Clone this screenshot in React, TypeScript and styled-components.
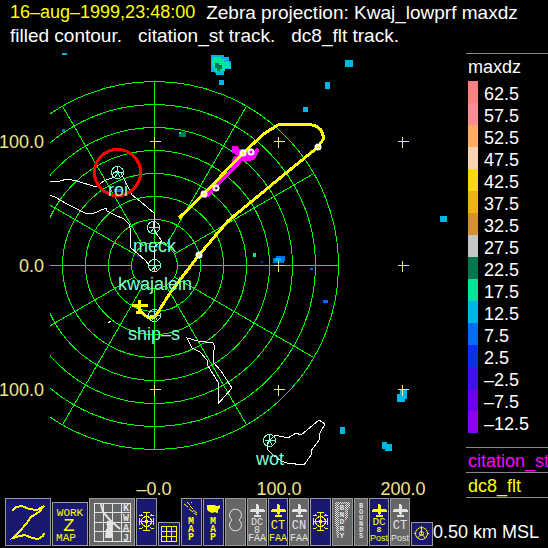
import React from "react";
import styled, { createGlobalStyle } from "styled-components";

const GlobalStyle = createGlobalStyle`
  body { margin: 0; background: #000; overflow: hidden; }
  * { box-sizing: border-box; }
`;

const Page = styled.main`
  min-height: 100vh;
  display: flex;
  flex-direction: column;
  background: #000;
  color: #fff;
  font: 18px "Liberation Sans", Arial, sans-serif;
`;

const Header = styled.header`
  padding: 1px 10px;
  line-height: 23px;
`;

const TitleRow = styled.div`
  display: flex;
  gap: 11px;
`;

const TrackRow = styled.div`
  display: flex;
  gap: 16px;
  font-size: 19px;
`;

const Timestamp = styled.time`
  color: #ff0;
`;

const Title = styled.span`
  font-size: 19px;
`;

const Body = styled.div`
  display: grid;
  grid-template-columns: minmax(0, 1fr) 82px;
  flex: 1;
`;

const Plot = styled.svg`
  display: block;
  width: 100%;
  height: auto;
  font: 18px "Liberation Sans", Arial, sans-serif;
`;

const Legend = styled.aside`
  margin-top: 5px;
  border-top: 1px solid #888;
  overflow: hidden;
`;

const LegendTitle = styled.div`
  padding-left: 2px;
  line-height: 27px;
`;

const Scale = styled.ul`
  list-style: none;
  margin: 0 0 14px;
  padding: 0 0 0 2px;
`;

const ScaleRow = styled.li`
  display: flex;
  gap: 6px;
  height: 22px;
  line-height: 26px;
`;

const Swatch = styled.span<{ $color: string }>`
  width: 10px;
  background: ${(p) => p.$color};
`;

const Track = styled.div<{ $color: string; $last?: boolean }>`
  height: 25px;
  padding: 2px 0 0 2px;
  border-top: 1px solid #888;
  line-height: 22px;
  white-space: nowrap;
  color: ${(p) => p.$color};
  ${(p) => p.$last && "height: 26px; border-bottom: 1px solid #888;"}
`;

const Footer = styled.footer`
  display: flex;
  align-items: flex-end;
  padding: 0 0 2px 5px;
`;

const Toolbar = styled.nav`
  display: flex;
  align-items: flex-end;
  gap: 1px;
`;

const ToolButton = styled.button<{ $w: number; $h: number; $active?: boolean }>`
  width: ${(p) => p.$w}px;
  height: ${(p) => p.$h}px;
  flex: none;
  padding: 0;
  border: 1px solid #999;
  background: ${(p) => (p.$active ? "#191970" : "#666")};
  color: ${(p) => (p.$active ? "#ff0" : "#e4e4e4")};

  svg {
    display: block;
    fill: none;
    stroke: currentColor;
    font-family: "Liberation Mono", monospace;
  }

  text {
    fill: currentColor;
    stroke: none;
    text-anchor: middle;
  }
`;

const Altitude = styled.output`
  line-height: 28px;
  white-space: nowrap;
`;

const scale = [
  ["62.5", "#ff8080"], ["57.5", "#ff8c94"], ["52.5", "#ffab60"], ["47.5", "#fad4b0"],
  ["42.5", "#f8d810"], ["37.5", "#ebb41f"], ["32.5", "#d6902f"], ["27.5", "#c6c6c6"],
  ["22.5", "#00784e"], ["17.5", "#00e69a"], ["12.5", "#00b4e6"], ["7.5", "#0070e8"],
  ["2.5", "#0c30e6"], ["–2.5", "#4010f0"], ["–7.5", "#6a00f0"], ["–12.5", "#8c00f5"],
];

const CX = 154.5;
const CY = 265.5;
const rings = [1, 2, 3, 4, 5, 6, 7, 8].map((n) => n * 23);
const spokes = Array.from({ length: 12 }, (_, i) => (i * Math.PI) / 6);
const gridX = [154.5, 278.5, 402.5];
const gridY = [141.5, 265.5, 389.5];

const echoes: [number, number, number, number, string][] = [
  [62, 53, 5, 2, "#00b4e6"], [211, 55, 13, 17, "#00b4e6"], [224, 57, 5, 12, "#00b4e6"],
  [229, 61, 2, 8, "#00b4e6"], [216, 72, 8, 3, "#00b4e6"], [219, 80, 5, 5, "#00b4e6"],
  [345, 60, 8, 7, "#00b4e6"], [325, 82, 5, 7, "#00b4e6"], [303, 107, 5, 5, "#00b4e6"],
  [306, 107, 2, 1, "#00e69a"], [62, 129, 3, 3, "#0070e8"], [114, 189, 8, 3, "#0070e8"],
  [69, 222, 1, 1, "#0c30e6"], [137, 253, 2, 4, "#4010f0"], [179, 132, 7, 5, "#00784e"],
  [179, 132, 2, 2, "#00e69a"], [253, 253, 3, 4, "#00e69a"], [261, 261, 2, 2, "#0c30e6"],
  [273, 258, 11, 5, "#0070e8"], [276, 256, 9, 5, "#0070e8"], [275, 258, 6, 3, "#00b4e6"],
  [310, 268, 3, 2, "#0070e8"], [440, 216, 7, 6, "#00b4e6"], [323, 300, 5, 3, "#0070e8"],
  [397, 394, 8, 8, "#00b4e6"], [400, 389, 7, 10, "#00b4e6"], [340, 427, 5, 7, "#00b4e6"],
  [382, 442, 5, 7, "#00b4e6"], [385, 444, 7, 7, "#00b4e6"], [222, 174, 2, 2, "#4010f0"],
];

const stations: [number, number, string, number, number][] = [
  [117.5, 172.5, "roi", 108, 196],
  [153.5, 227.5, "meck", 133, 252],
  [154.5, 265.5, "kwajalein", 118, 290],
  [154.5, 315.5, "ship–s", 128, 340],
  [269.5, 440.5, "wot", 256, 465],
];

const fixes = [[204, 194], [216, 188], [243, 153], [251, 152], [318, 147], [199, 255]];

function RadarPlot() {
  return (
    <Plot viewBox="0 48 466 450" role="img" aria-label="Radar contour map">
      <defs>
        <clipPath id="plot-area">
          <rect x="50" y="48" width="416" height="434" />
        </clipPath>
      </defs>
      <g clipPath="url(#plot-area)" fill="none" shapeRendering="crispEdges">
        {echoes.map(([x, y, w, h, c], i) => (
          <rect key={i} x={x} y={y} width={w} height={h} fill={c} />
        ))}
        <path d="M213 57h8v2h3v3h5v3h2v3h-6v3h-8v2h-2v-4h-2v-4h-1v-5h1z" fill="#00e69a" />
        <path d="M215 63h4v2h3v4h-2v2h-3v-3h-2z" fill="#00784e" />
        <g stroke="#0f0">
          {rings.map((r) => <circle key={r} cx={CX} cy={CY} r={r} />)}
          {spokes.map((a) => (
            <line
              key={a}
              x1={CX + 23 * Math.cos(a)}
              y1={CY + 23 * Math.sin(a)}
              x2={CX + 184 * Math.cos(a)}
              y2={CY + 184 * Math.sin(a)}
            />
          ))}
        </g>
        <g stroke="#fff">
          <path d="M50 182L60 181 67 179 77 181 96 187 101 183 106 180 112 178 113 174 117 171 121 173 124 179 128 187 132 195 140 201 148 208 154 213 155 222 154 230 158 236 162 241 155 246 154 265" />
          <path d="M50 195L57 198 65 203 75 208 85 213 92 214 99 211 106 208 107 211 115 215 124 219 129 224 131 231 130 240 131 248 138 254 145 260 149 265 154 266" />
          <path d="M187 338L198 341 213 343 215 347 213 354 213 362 221 371 232 388 218 404 218 382 208 366 207 360 200 352 192 348z" />
          <path d="M269 441L275 435 288 438 296 433 301 435 319 420 325 424 320 433 319 440 311 451 311 455 304 465 287 463 281 461 272 454 268 450 267 443z" />
          <path d="M108 322h2M109 321h2" />
        </g>
        <path
          d="M233 146l4 0 2 3 7 0 7 3 4-4 2 2-3 6-2 3-7 2-6-1-2 5-7 7-10 10-8 8-5 6-4 2-1-1 10-11 17-17 5-7-4-1 2-4 5-1-7-4z"
          fill="#f0f"
          stroke="#f0f"
        />
        <path
          d="M179 218L204 194 243 153 265 133 278 125 292 124 308 124 316 126 321 130 324 138 318 147 280 178 228 221 222 228 199 255 170 293 160 309 155 317 149 318 143 314 138 307M132 305.500H148M139.500 300V313M136 312H142"
          stroke="#ff0"
          strokeWidth="3"
        />
        <g stroke="#f0e68c">
          {gridX.map((x) =>
            gridY.map((y) => <path key={`${x}-${y}`} d={`M${x - 5} ${y}h11M${x} ${y - 5}v11`} />)
          )}
        </g>
        <g stroke="#fff" strokeWidth="2" shapeRendering="auto">
          {fixes.map(([x, y]) => <circle key={x} cx={x} cy={y} r="2.500" />)}
        </g>
        <circle cx="117.500" cy="172.500" r="23" stroke="#f00" strokeWidth="3" />
        <g stroke="#7fffd4">
          {stations.map(([x, y, name]) => (
            <React.Fragment key={name}>
              <circle cx={x} cy={y} r="6" />
              <path d={`M${x - 5} ${y}h10M${x} ${y - 6}v7l-3 4M${x} ${y}l3 5`} />
            </React.Fragment>
          ))}
        </g>
      </g>
      <g fill="#7fffd4">
        {stations.map(([, , name, x, y]) => <text key={name} x={x} y={y}>{name}</text>)}
      </g>
      <g fill="#f0e68c">
        <g textAnchor="end">
          <text x="44" y="148">100.0</text>
          <text x="44" y="272">0.0</text>
          <text x="44" y="396">100.0</text>
        </g>
        <g textAnchor="middle">
          <text x="154" y="495">–0.0</text>
          <text x="279" y="495">100.0</text>
          <text x="403" y="495">200.0</text>
        </g>
      </g>
    </Plot>
  );
}

const Icon = ({ w, h, children }: { w: number; h: number; children: React.ReactNode }) => (
  <svg width={w - 2} height={h - 2} viewBox={`1 1 ${w - 2} ${h - 2}`} aria-hidden="true">
    {children}
  </svg>
);

function Tool({ w, h = 48, active, label, children }: {
  w: number; h?: number; active?: boolean; label: string; children: React.ReactNode;
}) {
  return (
    <ToolButton type="button" $w={w} $h={h} $active={active} aria-label={label}>
      <Icon w={w} h={h}>{children}</Icon>
    </ToolButton>
  );
}

const Plane = () => (
  <path
    d="M9 6h2v1h1v4h5v1h1v2h-6v2h-1v1h3v2H7v-2h3v-1H9v-2H3v-2h1v-1h5z"
    fill="currentColor"
    stroke="none"
  />
);

const Wheel = () => (
  <g shapeRendering="crispEdges">
    <path d="M7 14.500h7M7 32.500h7M3.500 20v7M17.500 20v7M5 16l2 2M16 16l-2 2M5 31l2-2M16 31l-2-2M3 17h3M15 17h3M3 30h3M15 30h3" />
    <circle cx="10.500" cy="23.500" r="5" />
    <path d="M3 23.500h15M10.500 14v19" />
    <path d="M9 22h3v3H9z" fill="currentColor" stroke="none" />
  </g>
);

const Stack = ({ text, x, y, step, size }: {
  text: string; x: number; y: number; step: number; size: number;
}) => (
  <g fontSize={size} fontWeight="bold">
    {[...text].map((ch, i) => <text key={i} x={x} y={y + i * step}>{ch}</text>)}
  </g>
);

const Post = () => (
  <text x="10" y="43" fontSize="9" fontFamily="Liberation Sans, sans-serif">Post</text>
);

function Tools() {
  return (
    <Toolbar>
      <Tool w={46} active label="Zebra">
        <path d="M7 13L11 9 17 8 24 11 32 12 39 8 34 14 26 19 21 26 15 33 8 40 15 38 20 37 27 40 33 41 38 38 39 35" strokeWidth="2" shapeRendering="crispEdges" />
      </Tool>
      <Tool w={36} h={44} active label="Work map">
        <text x="18" y="14" fontSize="11">WORK</text>
        <text x="17" y="29" fontSize="19">Z</text>
        <text x="14" y="39" fontSize="11">MAP</text>
      </Tool>
      <Tool w={46} label="KWAJ">
        <path d="M5.500 5.500h36v38h-36zM14.500 5v38M23.500 5v38M32.500 5v38M5 14.500h36M5 24.500h36M5 33.500h36" shapeRendering="crispEdges" />
        <path d="M12 6L14 14 21 22 31 31M20 23L18 27" strokeWidth="2" />
        <path d="M18 23h5l1 17h-8l1-9h1z" fill="currentColor" stroke="none" />
        <Stack text="KWAJ" x={37} y={13} step={10} size={10} />
      </Tool>
      <Tool w={21} active label="Range rings"><Wheel /></Tool>
      <Tool w={22} h={24} active label="Grid">
        <path d="M3.500 4.500h15v15h-15zM8.500 4v15M13.500 4v15M3 9.500h15M3 14.500h15" shapeRendering="crispEdges" />
      </Tool>
      <Tool w={21} active label="Island map">
        <path d="M3 6l4 3M8 11l4 3M13 15l3 2M6 4l3 3M9 8l3 3M12 12l4 3M11 5l-1-1" />
        <Stack text="MAP" x={10} y={26} step={8} size={10} />
      </Tool>
      <Tool w={21} active label="US map">
        <path d="M4 7h8l1 1h2l2-1v3l-2 2v3h-1l-2-1-3 1-2-1-2-1-1-2z" fill="currentColor" stroke="none" />
        <Stack text="MAP" x={10} y={26} step={8} size={10} />
      </Tool>
      <Tool w={21} label="Dual rings">
        <path d="M7 22A6 6 0 1 1 14 22 6 6 0 1 1 7 22z" />
      </Tool>
      <Tool w={20} label="DC8 FAA">
        <Plane />
        <text x="10" y="27" fontSize="10">DC</text>
        <text x="10" y="35" fontSize="10">8</text>
        <text x="10" y="43" fontSize="10">FAA</text>
      </Tool>
      <Tool w={20} active label="CT FAA">
        <Plane />
        <text x="10" y="31" fontSize="12">CT</text>
        <text x="10" y="43" fontSize="10">FAA</text>
      </Tool>
      <Tool w={20} label="CN FAA">
        <Plane />
        <text x="10" y="31" fontSize="12">CN</text>
        <text x="10" y="43" fontSize="10">FAA</text>
      </Tool>
      <Tool w={21} active label="Rings"><Wheel /></Tool>
      <Tool w={21} label="Boundary">
        <defs>
          <pattern id="dither" width="2" height="2" patternUnits="userSpaceOnUse">
            <path d="M0 0h1v1H0zM1 1h1v1H1z" fill="#e4e4e4" stroke="none" />
          </pattern>
        </defs>
        <path d="M3 4h4v36H5l-1-8-1-8zM13 4h5v5l-2 2v8l-3 5zM7 4h6v2H7z" fill="url(#dither)" stroke="none" />
        <Stack text="BNDRY" x={10} y={12} step={7} size={8} />
      </Tool>
      <Tool w={14} label="Bounds">
        <Stack text="BOUNDS" x={7} y={10} step={6} size={7} />
      </Tool>
      <Tool w={20} active label="DC8 Post">
        <Plane />
        <text x="10" y="27" fontSize="11">DC</text>
        <text x="10" y="34" fontSize="8" fontWeight="bold">8</text>
        <Post />
      </Tool>
      <Tool w={20} label="CT Post">
        <Plane />
        <text x="10" y="31" fontSize="12">CT</text>
        <Post />
      </Tool>
      <Tool w={22} h={24} active label="Compass">
        <circle cx="10.500" cy="11.500" r="6" />
        <circle cx="10.500" cy="11.500" r="2" />
        <path d="M10.500 4v8l-4 4M10.500 12l4 4M3 11.500h2M16 11.500h2" />
      </Tool>
    </Toolbar>
  );
}

export default function App() {
  return (
    <Page>
      <GlobalStyle />
      <Header>
        <TitleRow>
          <Timestamp>16–aug–1999,23:48:00</Timestamp>
          <Title>Zebra projection: Kwaj_lowprf maxdz</Title>
        </TitleRow>
        <TrackRow>
          <span>filled contour.</span>
          <span>citation_st track.</span>
          <span>dc8_flt track.</span>
        </TrackRow>
      </Header>
      <Body>
        <RadarPlot />
        <Legend>
          <LegendTitle>maxdz</LegendTitle>
          <Scale>
            {scale.map(([value, color]) => (
              <ScaleRow key={value}>
                <Swatch $color={color} />
                {value}
              </ScaleRow>
            ))}
          </Scale>
          <Track $color="#f0f">citation_st</Track>
          <Track $color="#ff0" $last>dc8_flt</Track>
        </Legend>
      </Body>
      <Footer>
        <Tools />
        <Altitude>0.50 km MSL</Altitude>
      </Footer>
    </Page>
  );
}
